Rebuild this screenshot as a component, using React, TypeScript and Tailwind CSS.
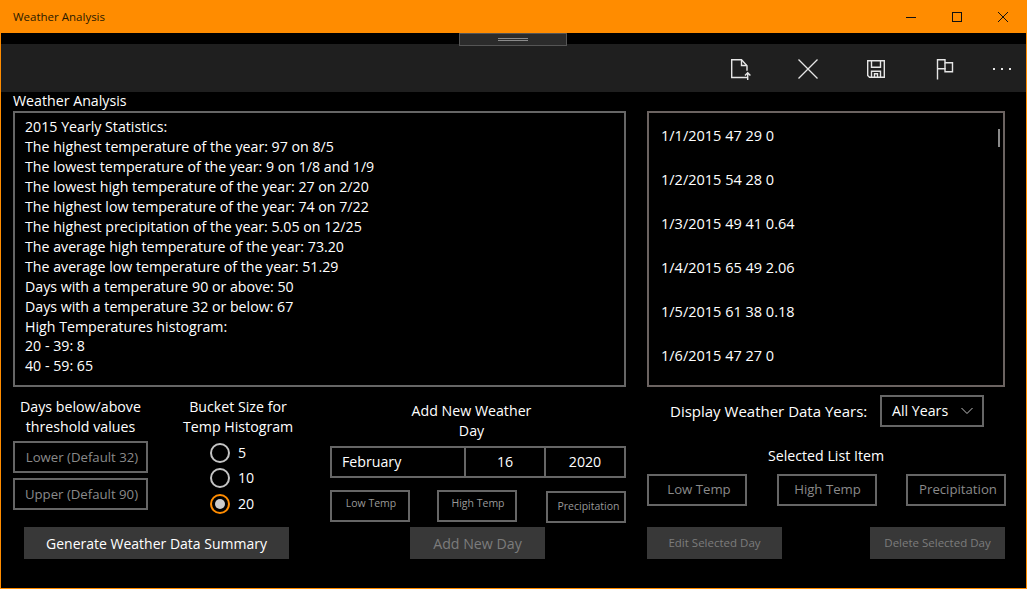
const font = "font-['Open_Sans','Noto_Sans',sans-serif]";

const stats = [
  "2015 Yearly Statistics:",
  "The highest temperature of the year: 97 on 8/5",
  "The lowest temperature of the year: 9 on 1/8 and 1/9",
  "The lowest high temperature of the year: 27 on 2/20",
  "The highest low temperature of the year: 74 on 7/22",
  "The highest precipitation of the year: 5.05 on 12/25",
  "The average high temperature of the year: 73.20",
  "The average low temperature of the year: 51.29",
  "Days with a temperature 90 or above: 50",
  "Days with a temperature 32 or below: 67",
  "High Temperatures histogram:",
  "20 - 39: 8",
  "40 - 59: 65",
];
const days = ["1/1/2015 47 29 0", "1/2/2015 54 28 0", "1/3/2015 49 41 0.64", "1/4/2015 65 49 2.06", "1/5/2015 61 38 0.18", "1/6/2015 47 27 0"];

function Radio({ label, on }: { label: string; on?: boolean }) {
  return (
    <div className="flex items-center gap-[8px] h-[25.5px] pl-[8px]">
      <span className={`w-[20px] h-[20px] rounded-full border-2 flex items-center justify-center ${on ? "border-[#ff8c00]" : "border-[#c4c4c4]"}`}>
        {on && <span className="w-[10px] h-[10px] rounded-full bg-[#cccccc]" />}
      </span>
      <span className="text-white">{label}</span>
    </div>
  );
}

function Field({ label, className }: { label: string; className: string }) {
  return (
    <div className={`border-2 border-[#666666] flex items-center justify-center text-[#8a8a8a] ${className}`}>{label}</div>
  );
}

export default function App() {
  return (
    <div className={`${font} w-[1027px] h-[589px] bg-black border border-t-0 border-[#ff8c00] flex flex-col overflow-hidden text-[14.2px] leading-[20px] text-white`}>
      <header className="h-[33px] shrink-0 bg-[#ff8c00] -mx-px flex items-center justify-between pl-[13px] text-[#2a1a00]">
        <span className="text-[11.5px]">Weather Analysis</span>
        <div className="flex items-center mr-[1px]">
          <svg width="46" height="33" viewBox="0 0 46 33"><path d="M18 17.500h10" stroke="#111" /></svg>
          <svg width="46" height="33" viewBox="0 0 46 33"><rect x="18.500" y="12.500" width="9" height="9" fill="none" stroke="#111" /></svg>
          <svg width="46" height="33" viewBox="0 0 46 33"><path d="M18 12l10 10M28 12L18 22" stroke="#111" fill="none" /></svg>
        </div>
      </header>

      <div className="relative h-[11px] shrink-0">
        <div className="absolute left-[458px] top-0 w-[108px] h-[13px] bg-[#2b2b2b] border border-[#555555] flex flex-col items-center justify-center gap-[1px]">
          <span className="w-[30px] h-px bg-[#8a8a8a]" />
          <span className="w-[30px] h-px bg-[#8a8a8a]" />
        </div>
      </div>

      <nav className="h-[48px] shrink-0 bg-[#1f1f1f] flex items-center justify-end pr-[14px] pt-[1px]">
        <svg width="24" height="24" viewBox="0 0 24 24" fill="none" stroke="#e6e6e6" strokeWidth="1.4" className="mr-[44px]">
          <path d="M19.500 20.500H3.700V2.700h9.800l5.500 6v5" />
          <path d="M13.500 3v5.500H19" />
          <path d="M19.700 23v-7M17 18.500l2.700-2.700 2.700 2.700" />
        </svg>
        <svg width="24" height="24" viewBox="0 0 24 24" fill="none" stroke="#e6e6e6" strokeWidth="1.3" className="mr-[44px]">
          <path d="M2.500 2.500l19 19M21.500 2.500l-19 19" />
        </svg>
        <svg width="24" height="24" viewBox="0 0 24 24" fill="none" stroke="#e6e6e6" strokeWidth="1.4" className="mr-[45px]">
          <path d="M3.700 3.700h16.600v16.600H5.500l-1.800-1.800z" />
          <path d="M7.500 3.700v6.500h9V3.700" />
          <path d="M7.500 20.300v-6h9v6M10.500 20.300v-3.500h3v3.500" />
        </svg>
        <svg width="24" height="24" viewBox="0 0 24 24" fill="none" stroke="#e6e6e6" strokeWidth="1.4" className="mr-[35px]">
          <path d="M4.500 22.500V2.800H12v3h7.500v9H12v-3H5" />
          <path d="M12 5.800v6.500" />
        </svg>
        <svg width="20" height="4" viewBox="0 0 20 4" fill="#e6e6e6">
          <rect x="1" y="1" width="2" height="2" /><rect x="9" y="1" width="2" height="2" /><rect x="17" y="1" width="2" height="2" />
        </svg>
      </nav>

      <main className="flex-1 px-[12px] min-h-0">
        <div className="leading-[17px] h-[19px]">Weather Analysis</div>
        <div className="flex gap-[21px] h-[276px]">
          <div className="w-[613px] border-2 border-[#666666] pl-[10px] pt-[4px] overflow-hidden leading-[19.95px]">
            {stats.map((s) => <div key={s} className="whitespace-nowrap">{s}</div>)}
          </div>
          <div className="relative w-[358px] border-2 border-[#6b6361] overflow-hidden pl-[12px] pt-[1px] text-[14.5px]">
            {days.map((d) => <div key={d} className="h-[44px] flex items-center whitespace-nowrap">{d}</div>)}
            <span className="absolute right-[3px] top-[16px] w-[2px] h-[18px] bg-[#8a8a8a]" />
          </div>
        </div>

        <div className="flex">
          <section className="w-[317px] flex flex-col">
            <div className="flex h-[140px] pt-[10px]">
              <div className="w-[135px] flex flex-col">
                <p className="text-center h-[44px] whitespace-nowrap">Days below/above<br />threshold values</p>
                <Field label="Lower (Default 32)" className="w-[135px] h-[32px] mb-[5px] pl-[3px] pb-[1px] text-[13.2px]" />
                <Field label="Upper (Default 90)" className="w-[135px] h-[32px] pl-[2px] pb-[1px] text-[13.2px]" />
              </div>
              <div className="w-[110px] ml-[35px] flex flex-col">
                <p className="text-center whitespace-nowrap h-[43px]">Bucket Size for<br />Temp Histogram</p>
                <div className="pl-[19px]">
                  <Radio label="5" />
                  <Radio label="10" />
                  <Radio label="20" on />
                </div>
              </div>
            </div>
            <button className="ml-[11px] w-[265px] h-[32px] pt-[1px] bg-[#383838] text-white text-[14px]">Generate Weather Data Summary</button>
          </section>

          <section className="w-[296px] flex flex-col">
            <p className="text-center h-[59px] pt-[14px] w-[283px]">Add New Weather<br />Day</p>
            <div className="h-[32px] border-2 border-[#666666] flex">
              <div className="w-[134px] border-r-2 border-[#666666] pl-[10px] flex items-center">February</div>
              <div className="w-[80px] border-r-2 border-[#666666] flex items-center justify-center">16</div>
              <div className="flex-1 flex items-center justify-center">2020</div>
            </div>
            <div className="flex items-start mt-[12px] h-[37px] text-[10.5px]">
              <Field label="Low Temp" className="w-[80px] h-[32px] pb-[6px] pl-[2px] text-[#999999]" />
              <Field label="High Temp" className="w-[80px] h-[32px] ml-[27px] pb-[6px] pl-[2px] text-[#999999]" />
              <Field label="Precipitation" className="w-[80px] h-[32px] ml-[29px] mt-[1px] pb-[3px] pl-[5px] text-[#999999]" />
            </div>
            <button className="ml-[80px] w-[135px] h-[32px] pt-[1px] bg-[#383838] text-[#7c7c7c]">Add New Day</button>
          </section>

          <section className="w-[358px] ml-[21px] flex flex-col">
            <div className="flex items-center h-[48px]">
              <span className="ml-[23px] whitespace-nowrap text-[15px]">Display Weather Data Years:</span>
              <div className="ml-auto mr-[21px] w-[104px] h-[32px] border-2 border-[#666666] flex items-center justify-between pl-[10px] pr-[9px]">
                <span>All Years</span>
                <svg width="12" height="8" viewBox="0 0 12 8" fill="none" stroke="#c0c0c0"><path d="M.5 1l5.500 5.500L11.500 1" /></svg>
              </div>
            </div>
            <p className="text-center h-[20px] mt-[11px]">Selected List Item</p>
            <div className="flex justify-between mt-[8px] w-[359px] h-[53px] text-[13.2px]">
              <Field label="Low Temp" className="w-[100px] h-[32px] pb-[2px] pl-[4px]" />
              <Field label="High Temp" className="w-[100px] h-[32px] pb-[2px] pl-[2px]" />
              <Field label="Precipitation" className="w-[100px] h-[32px] pb-[2px] pl-[4px]" />
            </div>
            <div className="flex justify-between text-[11.5px]">
              <button className="w-[135px] h-[32px] bg-[#383838] text-[#7c7c7c]">Edit Selected Day</button>
              <button className="w-[135px] h-[32px] bg-[#383838] text-[#7c7c7c]">Delete Selected Day</button>
            </div>
          </section>
        </div>
      </main>
    </div>
  );
}
